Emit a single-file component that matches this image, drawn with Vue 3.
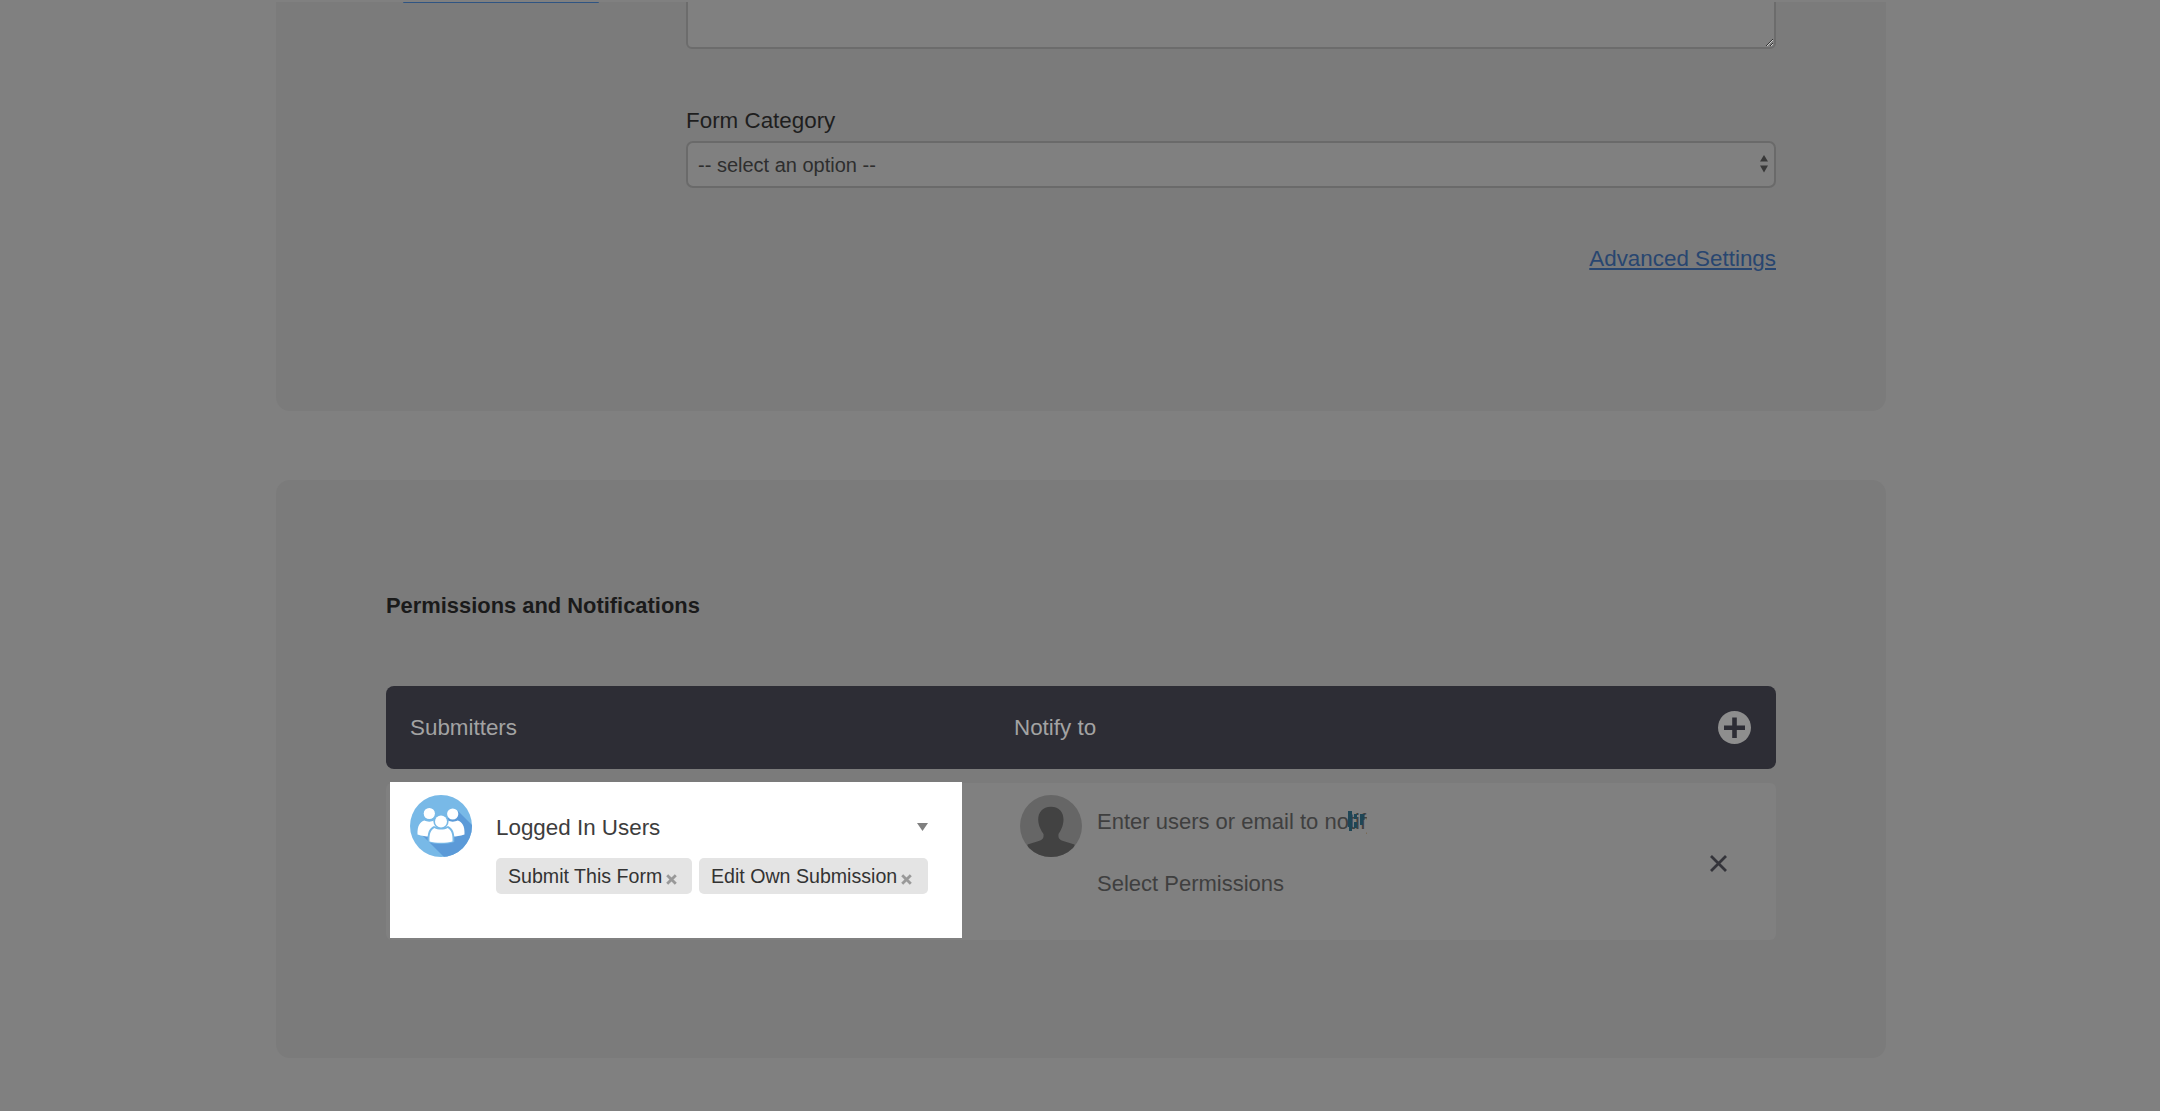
<script setup>
import { ref } from 'vue';

const permissions = ref([
  { id: 1, label: 'Submit This Form', width: 196 },
  { id: 2, label: 'Edit Own Submission', width: 229 },
]);
</script>

<template>
  <main class="page">
    <section class="card card-top">
      <div class="side-col">
        <div class="side-link-edge"></div>
      </div>
      <div class="form-col">
        <textarea class="form-textarea"></textarea>
        <label class="form-label" for="category">Form Category</label>
        <div class="select-wrap">
          <select id="category" class="form-select">
            <option>-- select an option --</option>
          </select>
          <svg class="select-arrows" width="8" height="18" viewBox="0 0 8 18">
            <path d="M4 0L8 6.5H0Z" fill="#383838" />
            <path d="M0 10.5H8L4 17.5Z" fill="#383838" />
          </svg>
        </div>
        <div class="link-row">
          <a class="advanced-link" href="#">Advanced Settings</a>
        </div>
      </div>
    </section>

    <section class="card card-bottom">
      <h2 class="section-title">Permissions and Notifications</h2>

      <div class="table-head">
        <span class="head-submitters">Submitters</span>
        <span class="head-notify">Notify to</span>
        <svg class="head-add" width="33" height="33" viewBox="0 0 33 33">
          <circle cx="16.5" cy="16.5" r="16.5" fill="#8e8e8e" />
          <path d="M16.5 6.5V27M6 16.7H27" stroke="#2d2d35" stroke-width="4.6" fill="none" />
        </svg>
      </div>

      <div class="table-row">
        <!-- highlighted cell -->
        <div class="submitter-cell">
          <svg class="avatar" width="62" height="62" viewBox="0 0 62 62">
            <defs>
              <clipPath id="groupClip"><circle cx="31" cy="31" r="31" /></clipPath>
            </defs>
            <circle cx="31" cy="31" r="31" fill="#78b9e7" />
            <path d="M12 40L34 62H62V30L48 16Z" fill="#5b9ad8" clip-path="url(#groupClip)" />
            <circle cx="19.3" cy="18.5" r="5.6" fill="#fff" />
            <circle cx="42.7" cy="19" r="5.6" fill="#fff" />
            <path d="M7.5 39.5C7.2 31 10 26.5 14.5 25.5C17 27 21.5 27 24 25.5C27 26.5 29 28 30 30H32C33 28 35 26.5 38 25.5C40.5 27 45 27 47.5 25.5C52 26.5 55 31 54.5 39.5C50 41 46 41.5 43 41.5H19C16 41.5 12 41 7.5 39.5Z" fill="#fff" />
            <circle cx="31" cy="26.5" r="7.6" fill="#78b9e7" />
            <path d="M17.8 47C17 38.5 19 33 24 31C27 33 35 33 38 31C43 33 45 38.5 44.2 47C38 49.5 24 49.5 17.8 47Z" fill="#78b9e7" />
            <circle cx="31" cy="26.5" r="6" fill="#fff" />
            <path d="M19.5 46.5C19 39 21 34.5 24.5 33C27.5 35 34.5 35 37.5 33C41 34.5 43 39 42.5 46.5C37 48.3 25 48.3 19.5 46.5Z" fill="#fff" />
          </svg>
          <div class="submitter-body">
            <div class="submitter-title">
              <span>Logged In Users</span>
              <svg class="title-caret" width="11" height="8" viewBox="0 0 11 8"><path d="M0 0H11L5.5 8Z" fill="#808080" /></svg>
            </div>
            <div class="chips">
              <span v-for="p in permissions" :key="p.id" class="chip" :style="{ width: p.width + 'px' }">
                {{ p.label }}
                <svg class="chip-x" width="11" height="11" viewBox="0 0 11 11">
                  <path d="M1.2 1.2L9.8 9.8M9.8 1.2L1.2 9.8" stroke="#999" stroke-width="2.8" fill="none" />
                </svg>
              </span>
            </div>
          </div>
        </div>

        <div class="notify-cell">
          <svg class="avatar" width="62" height="62" viewBox="0 0 62 62">
            <defs>
              <clipPath id="userClip"><circle cx="31" cy="31" r="31" /></clipPath>
            </defs>
            <circle cx="31" cy="31" r="31" fill="#666" />
            <path d="M31 11.7C39.5 11.7 43.5 17.5 43.5 24.5C43.5 31 40.5 36 38.5 39C38 43.5 39.5 45 44 46.3L54.5 49.5V62H7.5V49.5L18 46.3C22.5 45 24 43.5 23.5 39C21.5 36 18.2 31 18.2 24.5C18.2 17.5 22.5 11.7 31 11.7Z" fill="#424242" clip-path="url(#userClip)" />
          </svg>
          <div class="notify-body">
            <div class="notify-input">
              <input class="notify-field" placeholder="Enter users or email to notify" />
              <!-- stray cursor sitting over the text -->
              <svg class="cursor-mark" width="17" height="20" viewBox="0 0 17 20">
                <path d="M0 0H4V20H1V16H0ZM6 3H9V8H6ZM6 11H9V17H6ZM12 3H16.5V9H15V14H12Z" fill="#1f4656" />
              </svg>
            </div>
            <div class="notify-select">Select Permissions</div>
          </div>
          <svg class="row-close" width="17" height="17" viewBox="0 0 17 17">
            <path d="M1 1L16 16M16 1L1 16" stroke="#34343a" stroke-width="2.8" fill="none" />
          </svg>
        </div>
      </div>
    </section>
  </main>
</template>

<style scoped>
.page {
  height: 1111px;
  padding-top: 2px;
  box-sizing: border-box;
  background-color: #808080;
  font-family: "Liberation Sans", Arial, sans-serif;
  overflow: hidden;
}

.card {
  width: 1610px;
  margin-left: 276px;
  box-sizing: border-box;
  background-color: #7b7b7b;
  padding: 0 110px;
}

.card-top {
  height: 409px;
  border-radius: 0 0 14px 14px;
  display: flex;
  overflow: hidden;
}

.side-col {
  width: 300px;
}

.side-link-edge {
  width: 196px;
  height: 1px;
  margin-left: 17px;
  background-color: #2f5482;
  border-radius: 0 0 3px 3px;
}

.form-col {
  width: 1090px;
  display: flex;
  flex-direction: column;
}

.form-textarea {
  display: block;
  width: 1090px;
  height: 127px;
  margin: -80px 0 0;
  box-sizing: border-box;
  background-color: #808080;
  border: 2px solid #6c6c6c;
  border-radius: 6px;
}

.form-label {
  margin-top: 59px;
  font-size: 22.4px;
  line-height: 26px;
  color: #1e1e1e;
}

.select-wrap {
  position: relative;
  margin-top: 7px;
}

.form-select {
  display: block;
  width: 100%;
  height: 47px;
  padding: 0 10px;
  appearance: none;
  box-sizing: border-box;
  background-color: #808080;
  border: 2px solid #6a6a6a;
  border-radius: 7px;
  font-family: inherit;
  font-size: 20px;
  color: #2e2e2e;
}

.select-arrows {
  position: absolute;
  top: 14px;
  right: 8px;
}

.link-row {
  display: flex;
  justify-content: flex-end;
  margin-top: 58px;
}

.advanced-link {
  font-size: 22.4px;
  line-height: 26px;
  color: #284670;
  text-decoration: underline;
}

.card-bottom {
  height: 578px;
  margin-top: 69px;
  padding-top: 113px;
  border-radius: 14px;
}

.section-title {
  margin: 0;
  font-size: 21.9px;
  line-height: 26px;
  font-weight: bold;
  color: #1a1a1a;
}

.table-head {
  display: flex;
  align-items: center;
  height: 83px;
  margin-top: 67px;
  padding: 0 25px 0 24px;
  box-sizing: border-box;
  background-color: #2d2d35;
  border-radius: 8px;
  font-size: 22.4px;
  line-height: 28px;
  color: #a3a3a3;
}

.head-submitters {
  width: 604px;
}

.head-add {
  margin-left: auto;
}

.table-row {
  display: flex;
  height: 157px;
  margin-top: 14px;
  background-color: #808080;
  border-radius: 6px;
}

.submitter-cell {
  display: flex;
  gap: 24px;
  width: 572px;
  height: 156px;
  margin: -1px 0 0 4px;
  padding: 13px 0 0 20px;
  box-sizing: border-box;
  background-color: #fff;
}

.avatar {
  flex-shrink: 0;
}

.submitter-body {
  width: 432px;
}

.submitter-title {
  display: flex;
  align-items: center;
  justify-content: space-between;
  height: 63px;
  padding-top: 2px;
  box-sizing: border-box;
  font-size: 22.4px;
  color: #3d3d3d;
}

.title-caret {
  margin-top: -1px;
}

.chips {
  display: flex;
  gap: 7px;
}

.chip {
  display: flex;
  align-items: center;
  gap: 4px;
  height: 36px;
  padding: 1px 0 0 12px;
  box-sizing: border-box;
  white-space: nowrap;
  background-color: #e4e4e4;
  border-radius: 5px;
  font-size: 19.6px;
  color: #333;
}

.chip-x {
  margin-top: 5px;
}

.notify-cell {
  display: flex;
  flex: 1;
  padding: 12px 49px 0 58px;
  gap: 15px;
}

.notify-body {
  display: flex;
  flex-direction: column;
  font-size: 22px;
  line-height: 26px;
  color: #3f3f3f;
}

.notify-input {
  position: relative;
  width: 270px;
  margin-top: 14px;
}

.notify-field {
  display: block;
  width: 270px;
  height: 26px;
  padding: 0;
  border: none;
  outline: none;
  background: transparent;
  font-family: inherit;
  font-size: 22px;
  color: #3f3f3f;
}

.notify-field::placeholder {
  color: #3f3f3f;
  opacity: 1;
}

.cursor-mark {
  position: absolute;
  top: 2px;
  left: 251px;
}

.notify-select {
  margin-top: 36px;
}

.row-close {
  margin: 60px 0 0 auto;
}
</style>

<style>
html, body {
  margin: 0;
  overflow: hidden;
  background-color: #808080;
}
</style>
